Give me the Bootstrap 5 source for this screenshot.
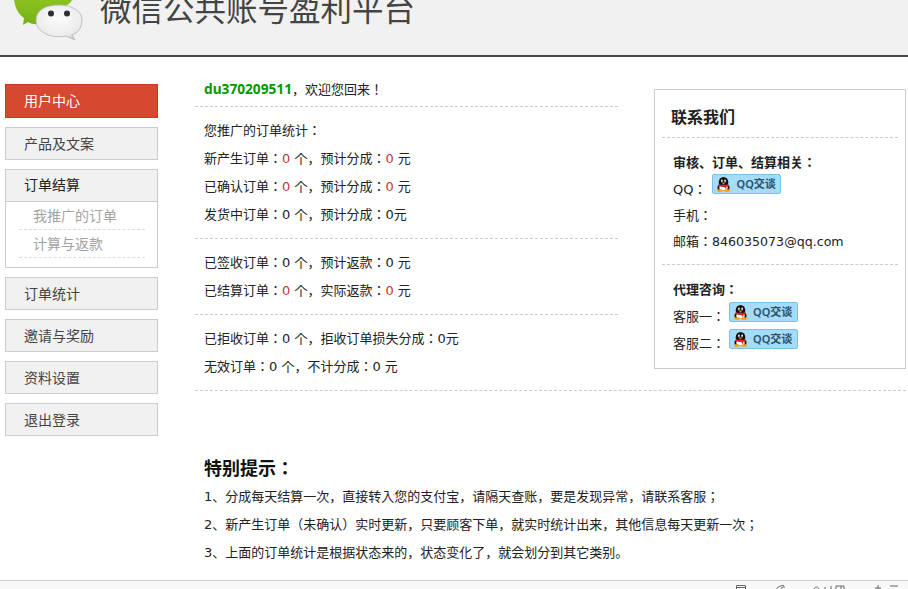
<!DOCTYPE html>
<html lang="ja">
<head>
<meta charset="utf-8">
<title>微信公共账号盈利平台</title>
<link rel="stylesheet" href="https://cdn.jsdelivr.net/npm/bootstrap@5.3.0/dist/css/bootstrap.min.css">
<style>
html,body{height:589px;overflow:hidden}
body{font-family:"DejaVu Sans","Noto Sans CJK JP",sans-serif;font-size:13px;color:#222;background:#fff;line-height:28px}
.top-bar{height:57px;background:#f1f1f1;border-bottom:2px solid #484848;overflow:hidden}
.top-logo{width:90px;height:55px;flex:none}
.top-title{font-size:31.5px;line-height:32px;margin:-9px 0 0 10px;color:#444;white-space:nowrap;font-family:"Noto Sans CJK SC",sans-serif}
.main-wrap{height:523px}
.side-col{width:153px;margin:27px 0 0 5px;flex:none;gap:9px}
.side-item{height:33px;line-height:32px;padding-left:18px;background:#f1f1f1;border:1px solid #ccc;color:#444;font-size:14px}
.side-active{height:34px;background:#d64830;border-color:#c63a22;color:#fff}
.side-group{border:1px solid #ccc;height:99px}
.side-head{height:32px;line-height:31px;padding-left:18px;background:#f1f1f1;border-bottom:1px solid #ccc;color:#222;font-size:14px}
.side-sub{margin:0 12px 0 13px;height:28px;line-height:28px;padding-left:14px;border-bottom:1px dashed #ddd;color:#a3a3a3;font-size:14px}
.content-col{margin-left:37px;width:711px}
.stats-col{width:423px;flex:none;padding-top:17px}
.stat-sec{padding:10px 0 9px 9px;border-bottom:1px dashed #ccc}
.greet{height:33px;line-height:30px;padding-left:9px;border-bottom:1px dashed #ccc}
.greet-name{color:#090;font-weight:700;font-family:"Noto Sans",sans-serif;font-size:13.7px}
.num{color:#c8352b}
.contact-box{width:252px;height:280px;margin:32px 0 0 36px;border:1px solid #ccc;padding:0 7px;flex:none}
.contact-title{font-size:16px;font-weight:700;color:#222;height:48px;line-height:56px;padding-left:9px;border-bottom:1px dashed #ccc}
.contact-sec{padding:11px 0 0 11px}
.contact-sec b{display:block;height:26px;line-height:28px;color:#222}
.contact-a{height:127px;border-bottom:1px dashed #ccc}
.c-row{height:26px;display:flex;line-height:30px}
.contact-b .c-row{height:27px}
.c-mail{font-size:12.6px}
.qq-btn{display:flex;align-items:center;gap:5px;width:69px;height:20px;line-height:18px;background:#a6dcf8;border:1px solid #7cc0ea;border-radius:2px;color:#2a5068;font-size:11px;font-weight:600;font-family:"Noto Sans","Noto Sans CJK SC",sans-serif;padding-left:3px;margin-left:4px}
.qq-first{margin:-1px 0 0 6px}
.qq-btn svg{flex:none}
.wide-rule{border-bottom:1px dashed #ccc;height:1px}
.tips{padding:64px 0 0 9px}
.tips-title{font-size:18px;font-weight:700;color:#111;line-height:28px}
.foot-bar{height:9px;background:#f8f8f8;border-top:1px solid #ccc;overflow:hidden}
.foot-art{width:180px;height:8px;flex:none}
</style>
</head>
<body>
<svg width="0" height="0" class="d-none">
  <symbol id="qq" viewBox="0 0 15 15">
    <ellipse cx="7.5" cy="5.2" rx="4.8" ry="5.2" fill="#111"/>
    <path d="M1.5 11 C1.5 8 3 7 7.5 7 C12 7 13.5 8 13.5 11 C13.5 13.5 11 14 7.5 14 C4 14 1.5 13.5 1.5 11Z" fill="#111"/>
    <ellipse cx="7.5" cy="10.8" rx="4.2" ry="3" fill="#fff"/>
    <ellipse cx="5.9" cy="3.8" rx=".9" ry="1.3" fill="#eee"/><ellipse cx="9.1" cy="3.8" rx=".9" ry="1.3" fill="#eee"/>
    <path d="M5.2 5.6 H9.8 L7.5 7Z" fill="#f2a60f"/>
    <path d="M2.6 7.2 C5 8.2 10 8.2 12.4 7.2 L12.8 9.2 L10.2 9.8 L10.4 12.6 L8.2 10 C6 10 3.8 9.8 2.4 9.2Z" fill="#e0241a"/>
    <ellipse cx="3.8" cy="13.6" rx="3.2" ry="1.4" fill="#f2a60f"/><ellipse cx="11.2" cy="13.6" rx="3.2" ry="1.4" fill="#f2a60f"/>
  </symbol>
</svg>
<header class="top-bar d-flex">
  <svg class="top-logo" viewBox="0 0 90 55">
    <defs>
      <radialGradient id="wb" cx=".5" cy=".4" r=".65"><stop offset="0" stop-color="#fbfbfb"/><stop offset=".75" stop-color="#ececec"/><stop offset="1" stop-color="#c4c4c4"/></radialGradient>
      <linearGradient id="gb" x1="0" y1="0" x2="0" y2="1"><stop offset="0" stop-color="#8cc220"/><stop offset="1" stop-color="#74b017"/></linearGradient>
    </defs>
    <path d="M14 0 H72 C70 4 66 6 60 8 L40 24 C34 25 30 23 28 22 L23 25 L24 18 C18 14 15 7 14 0Z" fill="url(#gb)"/>
    <path d="M36 20 C36 10 46 5 59 5 C72 5 82 11 82 20 C82 28 78 33 72 35 L75 40 L66 36 C60 37 52 37 46 34 C40 31 36 27 36 20Z" fill="url(#wb)" stroke="#b5b5b5" stroke-width=".8"/>
    <circle cx="51" cy="13.5" r="3" fill="#2e2e2e"/><circle cx="67" cy="13.5" r="3" fill="#2e2e2e"/>
  </svg>
  <div class="top-title" lang="zh-Hans">微信公共账号盈利平台</div>
</header>
<div class="main-wrap d-flex">
  <nav class="side-col d-flex flex-column">
    <div class="side-item side-active">用户中心</div>
    <div class="side-item">产品及文案</div>
    <div class="side-group">
      <div class="side-head">订单结算</div>
      <div class="side-sub">我推广的订单</div>
      <div class="side-sub">计算与返款</div>
    </div>
    <div class="side-item">订单统计</div>
    <div class="side-item">邀请与奖励</div>
    <div class="side-item">资料设置</div>
    <div class="side-item">退出登录</div>
  </nav>
  <main class="content-col">
    <div class="d-flex">
      <section class="stats-col">
        <div class="greet"><span class="greet-name">du370209511</span>，欢迎您回来！</div>
        <div class="stat-sec">
          <div>您推广的订单统计：</div>
          <div>新产生订单：<span class="num">0</span> 个，预计分成：<span class="num">0</span> 元</div>
          <div>已确认订单：<span class="num">0</span> 个，预计分成：<span class="num">0</span> 元</div>
          <div>发货中订单：0 个，预计分成：0元</div>
        </div>
        <div class="stat-sec">
          <div>已签收订单：0 个，预计返款：0 元</div>
          <div>已结算订单：<span class="num">0</span> 个，实际返款：<span class="num">0</span> 元</div>
        </div>
        <div class="stat-sec border-0">
          <div>已拒收订单：0 个，拒收订单损失分成：0元</div>
          <div>无效订单：0 个，不计分成：0 元</div>
        </div>
      </section>
      <aside class="contact-box">
        <div class="contact-title">联系我们</div>
        <div class="contact-sec contact-a">
          <b>审核、订单、结算相关：</b>
          <div class="c-row">QQ：<span class="qq-btn qq-first"><svg width="15" height="15"><use href="#qq"/></svg>QQ交谈</span></div>
          <div class="c-row">手机：</div>
          <div class="c-row"><span>邮箱：<span class="c-mail">846035073@qq.com</span></span></div>
        </div>
        <div class="contact-sec contact-b">
          <b>代理咨询：</b>
          <div class="c-row">客服一：<span class="qq-btn"><svg width="15" height="15"><use href="#qq"/></svg>QQ交谈</span></div>
          <div class="c-row">客服二：<span class="qq-btn"><svg width="15" height="15"><use href="#qq"/></svg>QQ交谈</span></div>
        </div>
      </aside>
    </div>
    <div class="wide-rule"></div>
    <section class="tips">
      <div class="tips-title">特别提示：</div>
      <div>1、分成每天结算一次，直接转入您的支付宝，请隔天查账，要是发现异常，请联系客服；</div>
      <div>2、新产生订单（未确认）实时更新，只要顾客下单，就实时统计出来，其他信息每天更新一次；</div>
      <div>3、上面的订单统计是根据状态来的，状态变化了，就会划分到其它类别。</div>
    </section>
  </main>
</div>
<footer class="foot-bar d-flex justify-content-end">
  <svg class="foot-art" viewBox="0 0 180 8" fill="none" stroke="#666" stroke-width="1">
    <path d="M8.5 9V4.5H17.5V9M8.5 6.5H17.5"/>
    <path d="M48 9C49 6 52 4.5 56 4.5M52 9C53 7 54 6 57 6"/>
    <path d="M86 9C86 5 91 5 91 9M97 6V9M103 5V9M108 5V9H116V5H108M113 5V9"/>
    <path d="M150 4V9M147 7H153M162 5H170"/>
  </svg>
</footer>
</body>
</html>
